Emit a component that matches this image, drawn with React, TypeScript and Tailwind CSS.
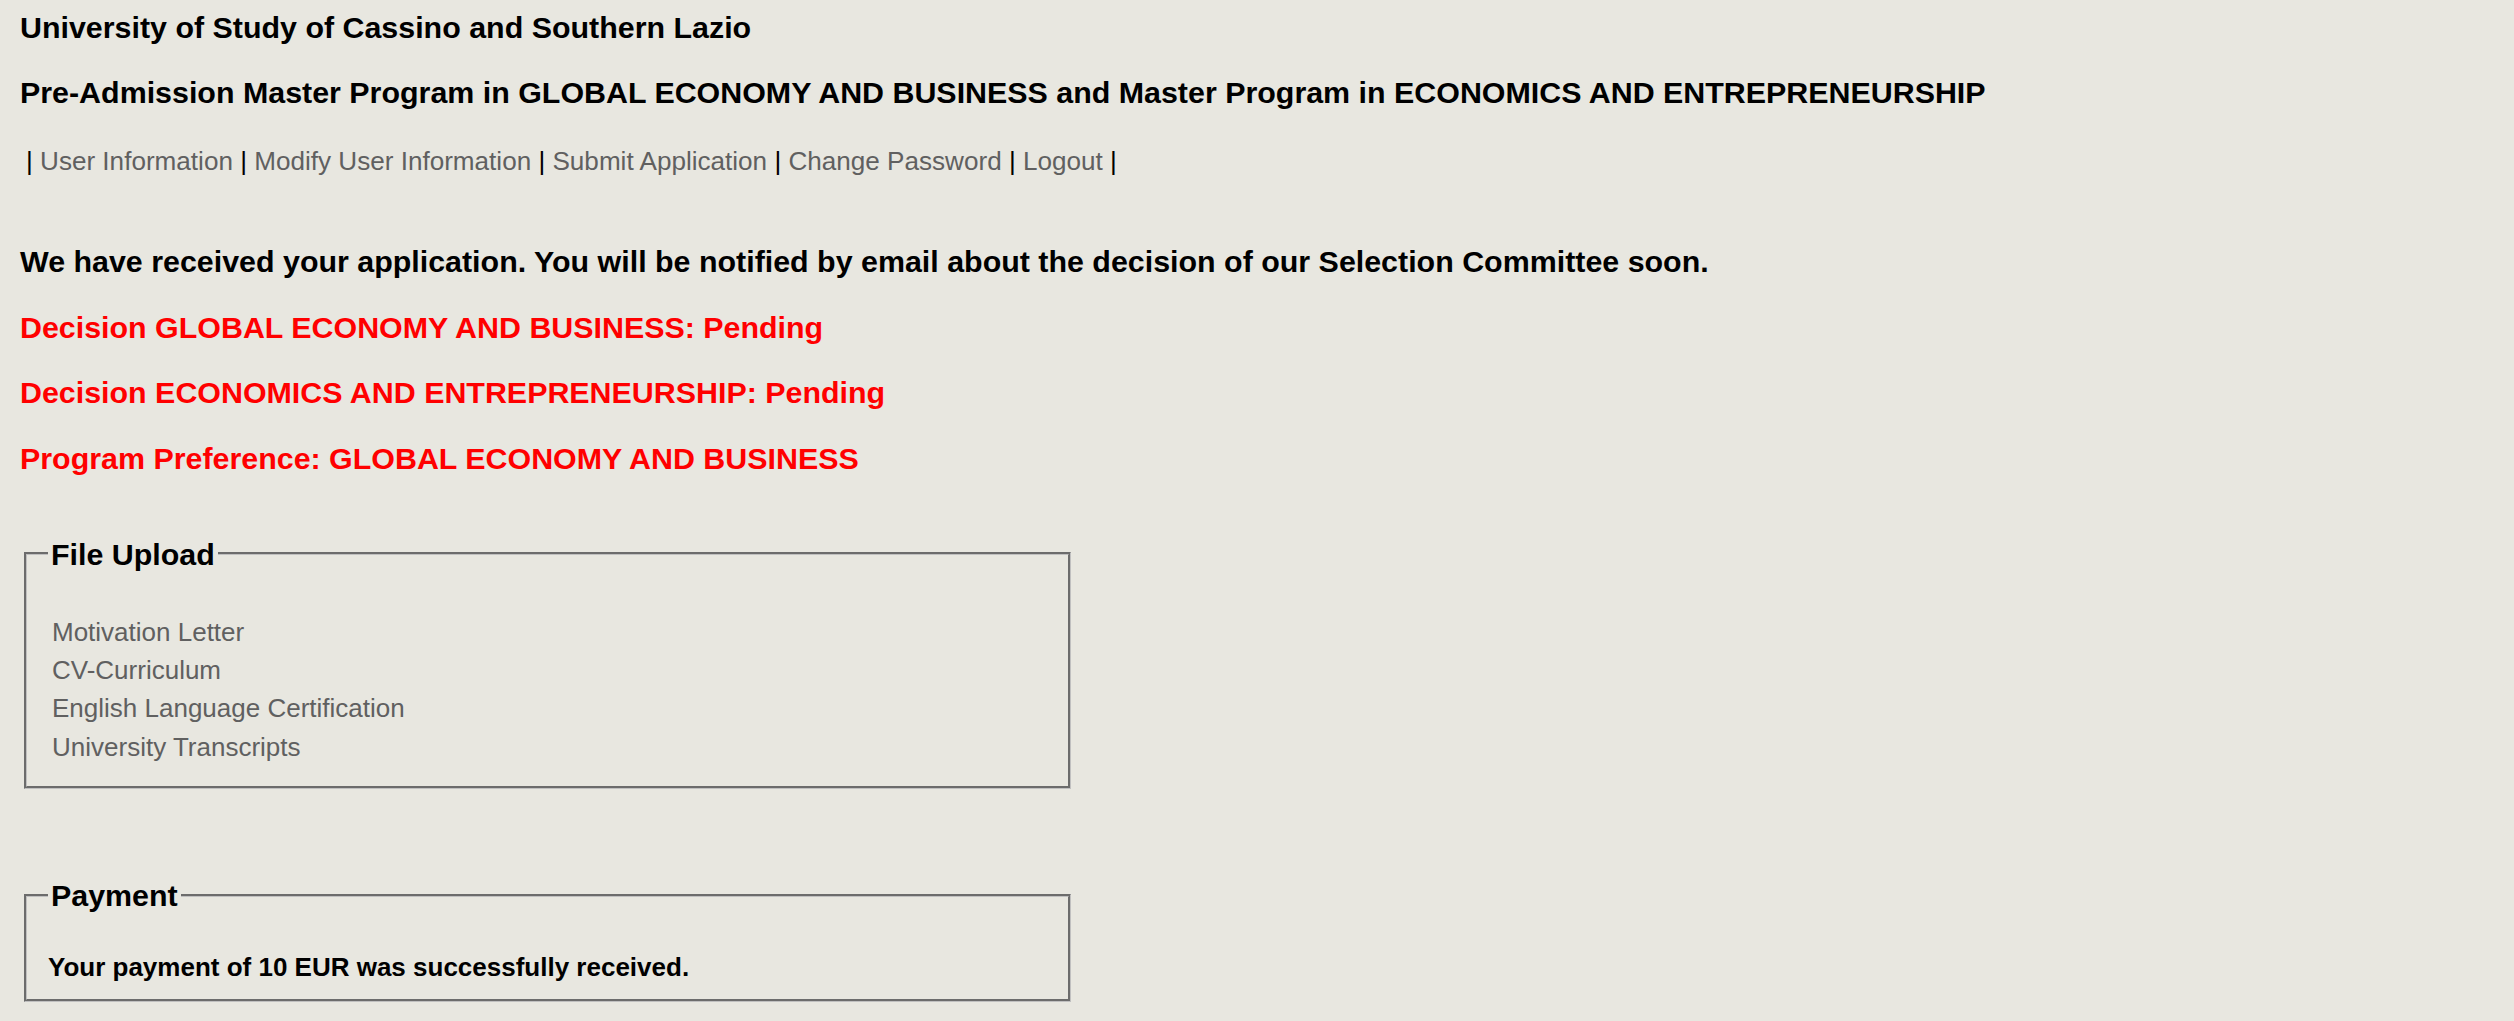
const navLinks = [
  "User Information",
  "Modify User Information",
  "Submit Application",
  "Change Password",
  "Logout",
];

const uploads = [
  "Motivation Letter",
  "CV-Curriculum",
  "English Language Certification",
  "University Transcripts",
];

const decisions = [
  "Decision GLOBAL ECONOMY AND BUSINESS: Pending",
  "Decision ECONOMICS AND ENTREPRENEURSHIP: Pending",
  "Program Preference: GLOBAL ECONOMY AND BUSINESS",
];

export default function App() {
  return (
    <div className="min-h-screen bg-[#e8e7e0] pl-[20px] pt-[10px] font-['Liberation_Sans',Arial,sans-serif] text-black">
      <h3 className="text-[30.4px] font-bold leading-[34px]">University of Study of Cassino and Southern Lazio</h3>
      <h3 className="mt-[31px] text-[30.4px] font-bold leading-[34px]">
        Pre-Admission Master Program in GLOBAL ECONOMY AND BUSINESS and Master Program in ECONOMICS AND ENTREPRENEURSHIP
      </h3>

      <div className="mt-[37px] pl-[6px] text-[26.1px] leading-[30px]">
        |
        {navLinks.map((link) => (
          <span key={link}>
            {" "}
            <a href="#" className="text-[#606060]">
              {link}
            </a>{" "}
            |
          </span>
        ))}
      </div>

      <h3 className="mt-[68px] text-[30.4px] font-bold leading-[34px]">
        We have received your application. You will be notified by email about the decision of our Selection Committee soon.
      </h3>
      {decisions.map((d) => (
        <h3 key={d} className="mt-[31.5px] text-[30.4px] font-bold leading-[34px] text-[#ff0000]">
          {d}
        </h3>
      ))}

      <fieldset className="mt-[63px] ml-[4px] w-[1047px] border-[3px] border-[#c0c0c0] pl-[21px] pb-[20px] [border-style:groove]">
        <legend className="px-[3px] text-[30.4px] font-bold leading-[32px]">File Upload</legend>
        <div className="pt-[43px] pl-[4px] text-[26px] leading-[38.4px] text-[#606060]">
          {uploads.map((u) => (
            <div key={u}>{u}</div>
          ))}
        </div>
      </fieldset>

      <fieldset className="mt-[90px] ml-[4px] w-[1047px] border-[3px] border-[#c0c0c0] pl-[21px] pb-[12px] [border-style:groove]">
        <legend className="px-[3px] text-[30.4px] font-bold leading-[32px]">Payment</legend>
        <p className="pt-[37px] text-[26px] font-bold leading-[38.4px]">
          Your payment of 10 EUR was successfully received.
        </p>
      </fieldset>
    </div>
  );
}
